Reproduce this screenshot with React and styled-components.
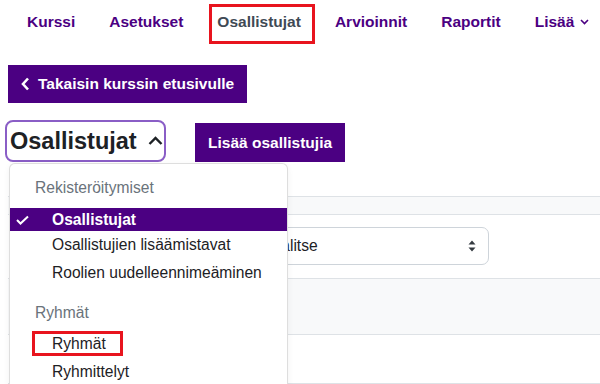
import styled, { createGlobalStyle } from "styled-components";

const GlobalStyle = createGlobalStyle`
  body {
    margin: 0;
    background: #fff;
    font-family: "Liberation Sans", Arial, sans-serif;
    color: #1d2125;
  }
`;

const purple = "#4b0082";

const Page = styled.div`
  width: 600px;
  height: 384px;
  overflow: hidden;
`;

const NavBar = styled.nav`
  display: flex;
  align-items: center;
  height: 44px;
  padding-left: 10px;
`;

const NavItem = styled.a`
  display: inline-flex;
  align-items: center;
  gap: 6px;
  padding: 0 17px;
  font-size: 15.5px;
  font-weight: 700;
  color: ${(p) => (p.$current ? "#3f4a55" : purple)};
  text-decoration: none;
`;

const NavLabel = styled.span`
  position: relative;

  ${(p) =>
    p.$marked &&
    `
    &::after {
      content: "";
      position: absolute;
      top: -9px;
      bottom: -13px;
      left: -8px;
      right: -14px;
      border: 3px solid #e8141e;
    }
  `}
`;

const PurpleButton = styled.button`
  display: inline-flex;
  align-items: center;
  gap: 8px;
  height: ${(p) => p.$height || 38}px;
  padding: 0 13px;
  border: none;
  border-radius: 0;
  background: ${purple};
  color: #fff;
  font-family: inherit;
  font-size: 15.5px;
  font-weight: 700;
`;

const BackRow = styled.div`
  margin: 21px 0 0 8px;
`;

const HeaderRow = styled.div`
  display: flex;
  align-items: flex-start;
  margin: 17px 0 0 5px;
`;

const ToggleWrap = styled.div`
  position: relative;
`;

const Toggle = styled.div`
  display: flex;
  align-items: center;
  gap: 11px;
  box-sizing: border-box;
  width: 161px;
  height: 42px;
  padding: 0 0 0 3px;
  border: 2.5px solid #8a5ec6;
  border-radius: 8px;
  font-size: 23.5px;
  font-weight: 700;
  color: #1d2125;
`;

const AddButtonSlot = styled.div`
  margin: 3px 0 0 29px;
`;

const Menu = styled.div`
  position: absolute;
  top: 43px;
  left: 4px;
  width: 279px;
  height: 260px;
  box-sizing: border-box;
  padding-top: 7px;
  background: #fff;
  border: 1px solid rgba(0, 0, 0, 0.13);
  border-radius: 6px;
  box-shadow: 0 2px 6px rgba(0, 0, 0, 0.06);
  z-index: 2;
  font-size: 15.6px;
`;

const MenuHeader = styled.div`
  height: 34px;
  line-height: 34px;
  padding-left: 25px;
  color: #6a737b;
  margin-top: ${(p) => p.$gap || 0}px;
`;

const MenuItem = styled.div`
  position: relative;
  display: flex;
  align-items: center;
  height: ${(p) => (p.$active ? 23 : 28)}px;
  margin-top: ${(p) => (p.$active ? 3 : 0)}px;
  padding-left: 6px;
  background: ${(p) => (p.$active ? purple : "transparent")};
  color: ${(p) => (p.$active ? "#fff" : "#1d2125")};
  font-weight: ${(p) => (p.$active ? 700 : 400)};

  ${(p) =>
    p.$marked &&
    `
    &::after {
      content: "";
      position: absolute;
      top: 1px;
      left: 22px;
      width: 91px;
      height: 25px;
      box-sizing: border-box;
      border: 3px solid #e8141e;
    }
  `}
`;

const CheckSlot = styled.span`
  display: inline-flex;
  align-items: center;
  width: 36px;
`;

const Content = styled.div`
  margin: 34px 0 0 8px;
`;

const Band = styled.div`
  height: ${(p) => p.$h}px;
  background: #f8f9fa;
  border-top: 1px solid #dee2e6;
  border-bottom: 1px solid #dee2e6;
`;

const SelectRow = styled.div`
  display: flex;
  padding: 12px 0 13px 250px;
`;

const Select = styled.div`
  display: flex;
  align-items: center;
  justify-content: space-between;
  box-sizing: border-box;
  width: 231px;
  height: 38px;
  padding: 0 12px 0 13px;
  border: 1px solid #ced4da;
  border-radius: 7px;
  font-size: 15.6px;
  color: #1d2125;
`;

const Row = styled.div`
  height: 48px;
  border-bottom: 1px solid #dee2e6;
`;

const NavChevron = () => (
  <svg width="9" height="6" viewBox="0 0 9 6">
    <polyline points="1,1 4.5,4.5 8,1" fill="none" stroke={purple} strokeWidth="1.6" />
  </svg>
);

const BackChevron = () => (
  <svg width="9" height="14" viewBox="0 0 9 14">
    <polyline points="7,1.5 2,7 7,12.5" fill="none" stroke="#fff" strokeWidth="2.6" />
  </svg>
);

const UpChevron = () => (
  <svg width="15" height="10" viewBox="0 0 15 10">
    <polyline points="1.5,8 7.5,2 13.5,8" fill="none" stroke="#1d2125" strokeWidth="2.4" />
  </svg>
);

const Check = () => (
  <svg width="13" height="10" viewBox="0 0 13 10">
    <polyline points="1,5 4.5,8.5 12,1.5" fill="none" stroke="#fff" strokeWidth="2" />
  </svg>
);

const SortArrows = () => (
  <svg width="8" height="12" viewBox="0 0 8 12">
    <polygon points="4,0.5 7.5,4.5 0.5,4.5" fill="#343a40" />
    <polygon points="4,11.5 7.5,7.5 0.5,7.5" fill="#343a40" />
  </svg>
);

const navLinks = ["Kurssi", "Asetukset", "Osallistujat", "Arvioinnit", "Raportit"];

function App() {
  return (
    <Page>
      <GlobalStyle />
      <NavBar>
        {navLinks.map((name) => (
          <NavItem key={name} $current={name === "Osallistujat"}>
            <NavLabel $marked={name === "Osallistujat"}>{name}</NavLabel>
          </NavItem>
        ))}
        <NavItem>
          Lisää
          <NavChevron />
        </NavItem>
      </NavBar>

      <BackRow>
        <PurpleButton $height={38}>
          <BackChevron />
          Takaisin kurssin etusivulle
        </PurpleButton>
      </BackRow>

      <HeaderRow>
        <ToggleWrap>
          <Toggle>
            Osallistujat
            <UpChevron />
          </Toggle>
          <Menu>
            <MenuHeader>Rekisteröitymiset</MenuHeader>
            <MenuItem $active>
              <CheckSlot>
                <Check />
              </CheckSlot>
              Osallistujat
            </MenuItem>
            <MenuItem>
              <CheckSlot />
              Osallistujien lisäämistavat
            </MenuItem>
            <MenuItem>
              <CheckSlot />
              Roolien uudelleennimeäminen
            </MenuItem>
            <MenuHeader $gap={9}>Ryhmät</MenuHeader>
            <MenuItem $marked>
              <CheckSlot />
              Ryhmät
            </MenuItem>
            <MenuItem>
              <CheckSlot />
              Ryhmittelyt
            </MenuItem>
          </Menu>
        </ToggleWrap>
        <AddButtonSlot>
          <PurpleButton $height={39}>Lisää osallistujia</PurpleButton>
        </AddButtonSlot>
      </HeaderRow>

      <Content>
        <Band $h={17} />
        <SelectRow>
          <Select>
            Valitse
            <SortArrows />
          </Select>
        </SelectRow>
        <Band $h={55} />
        <Row />
      </Content>
    </Page>
  );
}

export default App;
